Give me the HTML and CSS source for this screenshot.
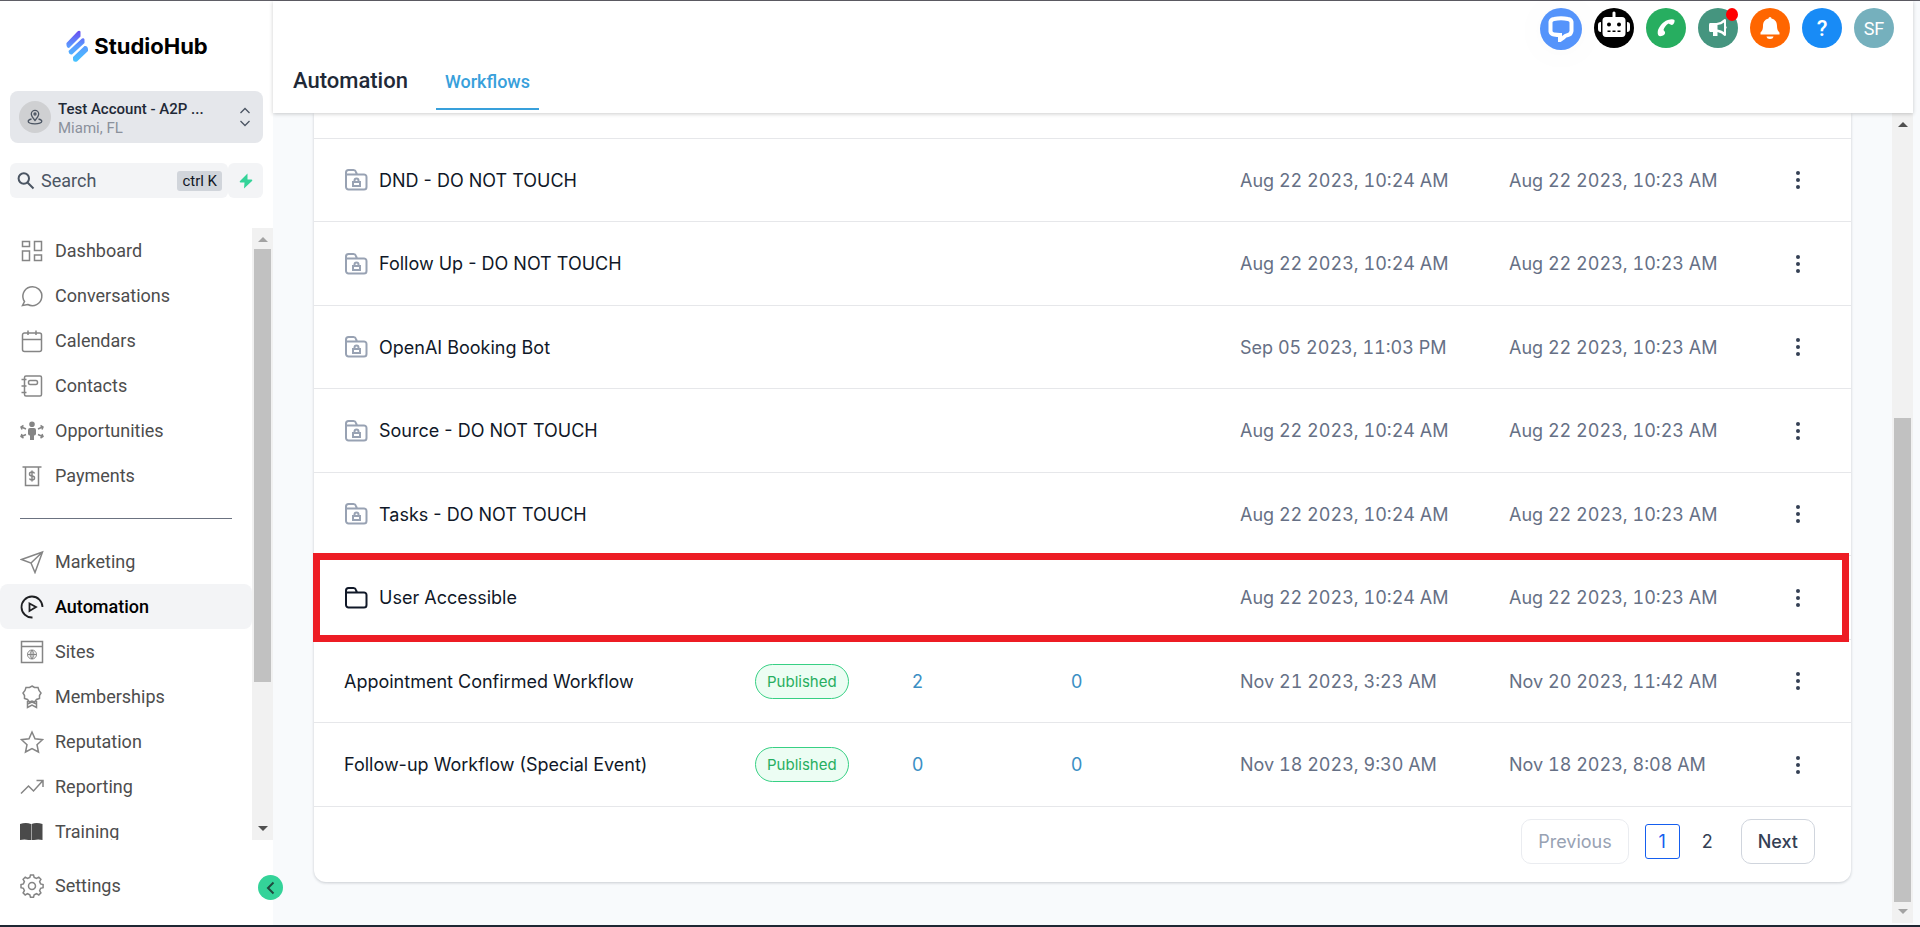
FILE: index.html
```html
<!DOCTYPE html>
<html lang="en">
<head>
    <meta charset="UTF-8">
    <meta name="viewport" content="width=device-width, initial-scale=1">
    <title>Workflows</title>
    <link rel="stylesheet" href="styles.css">
</head>
<body>
    <!-- Shared icons -->
    <svg class="sprite" aria-hidden="true">
        <symbol id="folder" viewBox="0 0 24 24">
            <path d="M2 19V4.500a2.500 2.500 0 0 1 2.500-2.500H9.500a2.500 2.500 0 0 1 2.400 1.800L13 6.500H19.500A2.500 2.500 0 0 1 22.500 9V19a2.500 2.500 0 0 1-2.500 2.500H4.500A2.500 2.500 0 0 1 2 19ZM2 6.500H13"/>
        </symbol>
        <symbol id="folder-lock" viewBox="0 0 24 24">
            <path d="M2 19V4.500a2.500 2.500 0 0 1 2.500-2.500H9.500a2.500 2.500 0 0 1 2.400 1.800L13 6.500H19.500A2.500 2.500 0 0 1 22.500 9V19a2.500 2.500 0 0 1-2.500 2.500H4.500A2.500 2.500 0 0 1 2 19ZM2 6.500H13M9 14h7v4H9ZM10.500 14v-1.500a2 2 0 0 1 4 0V14"/>
        </symbol>
        <symbol id="dots" viewBox="0 0 24 24">
            <circle cx="12" cy="5" r="2"/><circle cx="12" cy="12" r="2"/><circle cx="12" cy="19" r="2"/>
        </symbol>
    </svg>

    <div class="app">
        <aside class="sidebar">
            <div class="logo">
                <svg width="24" height="32" viewBox="0 0 24 32" aria-hidden="true">
                    <defs>
                        <linearGradient id="brand" x1="0" y1="0" x2="0" y2="1">
                            <stop offset="0" stop-color="#6a4cf0"/>
                            <stop offset="0.500" stop-color="#5b9bff"/>
                            <stop offset="1" stop-color="#45c4ff"/>
                        </linearGradient>
                    </defs>
                    <path fill="url(#brand)" d="M1.500 13 12 2q2-2 3.500-.5v5L4 18q-3-.5-2.500-5ZM3.500 21 17 8.500q2-1 2.500 1v3.500L7 24.500q-3 .5-3.500-3.500ZM8 27l11.500-11q3-.5 3.500 3v2L12 31.500q-4 1-4-2Z"/>
                </svg>
                <span>StudioHub</span>
            </div>

            <button class="account">
                <span class="account-icon">
                    <svg width="16" height="16" viewBox="0 0 16 16" class="line" aria-hidden="true">
                        <path d="M8 11.500C5.500 8.500 4.300 7 4.300 5a3.700 3.700 0 0 1 7.400 0c0 2-1.200 3.500-3.700 6.500ZM4.500 10C2.500 10.500 1.200 11.300 1.200 12.300c0 1.500 3 2.500 6.800 2.500s6.800-1 6.800-2.500c0-1-1.300-1.800-3.300-2.300"/>
                        <circle cx="8" cy="5" r="1"/>
                    </svg>
                </span>
                <span class="account-text">
                    <span class="account-name">Test Account - A2P ...</span>
                    <span class="account-city">Miami, FL</span>
                </span>
                <svg width="12" height="20" viewBox="0 0 12 20" class="line" aria-hidden="true">
                    <path d="M1.500 6 6 1.500 10.500 6M1.500 14 6 18.500 10.500 14"/>
                </svg>
            </button>

            <div class="search-row">
                <label class="search">
                    <svg width="18" height="18" viewBox="0 0 18 18" aria-hidden="true">
                        <path d="M11 11 16.500 16.500M12 6.500a5.200 5.200 0 1 1-10.400 0 5.200 5.200 0 0 1 10.400 0Z"/>
                    </svg>
                    <input type="text" placeholder="Search" aria-label="Search">
                    <kbd>ctrl K</kbd>
                </label>
                <button class="quick" aria-label="Quick actions">
                    <svg width="14" height="16" viewBox="0 0 14 16" aria-hidden="true">
                        <path d="M8.500.5 1 8q-1 1.300.5 1.500H5.500L5 15.500 13 8q1-1.300-.5-1.500H8.500Z"/>
                    </svg>
                </button>
            </div>

            <div class="nav-wrap">
                <nav class="nav">
                    <a href="#" class="nav-item">
                        <svg viewBox="0 0 24 24"><path d="M2.500 2.500h7v5h-7zM14.500 2.500h7v9h-7zM2.500 12h7v9.500h-7zM14.500 16h7v5.500h-7z"/></svg>
                        Dashboard
                    </a>
                    <a href="#" class="nav-item">
                        <svg viewBox="0 0 24 24"><path d="M4.500 17.500A9.500 9.500 0 1 1 7.800 20.500L2.500 21.500Z"/></svg>
                        Conversations
                    </a>
                    <a href="#" class="nav-item">
                        <svg viewBox="0 0 24 24"><path d="M4.500 4h15a2 2 0 0 1 2 2v14.500a2 2 0 0 1-2 2h-15a2 2 0 0 1-2-2V6a2 2 0 0 1 2-2ZM2.500 10.500h19M8 1.500V6M16 1.500V6"/></svg>
                        Calendars
                    </a>
                    <a href="#" class="nav-item">
                        <svg viewBox="0 0 24 24"><path d="M6 2h14a1.500 1.500 0 0 1 1.500 1.500v17A1.500 1.500 0 0 1 20 22H6a1.500 1.500 0 0 1-1.500-1.500v-17A1.500 1.500 0 0 1 6 2ZM1.500 5.500h5M1.500 12h5M1.500 18.500h5M10 6.500h6q1.500 0 1.500 2t-1.500 2h-6q-1.500 0-1.500-2t1.500-2Z"/></svg>
                        Contacts
                    </a>
                    <a href="#" class="nav-item">
                        <svg viewBox="0 0 24 24"><path class="solid" d="M12 2.500a2.800 2.800 0 1 1 0 5.600 2.800 2.800 0 0 1 0-5.600ZM10 9h4q2 0 2 2v4q-.5 1.500-2 1.500V21H10v-4.500q-1.500 0-2-1.500v-4q0-2 2-2Z"/><path d="M6 10 1.500 8M3.500 6.500 1 8l1 2.500M18 10l4.500-2M20.500 6.500 23 8l-1 2.500M6 15.500 1.500 17.500M2 15l-1 2.500L3.500 19M18 15.500l4.500 2M22 15l1 2.500-2.500 1.500"/></svg>
                        Opportunities
                    </a>
                    <a href="#" class="nav-item">
                        <svg viewBox="0 0 24 24"><path d="M2.500 3h19M5.500 3v18.500h13V3M14.500 9.500q-.5-1.500-2.500-1.500-2.500 0-2.500 2t2.500 2 2.500 2-2.500 2q-2 0-2.500-1.500M12 6.500v11"/></svg>
                        Payments
                    </a>
                    <hr>
                    <a href="#" class="nav-item">
                        <svg viewBox="0 0 24 24"><path d="M1.500 9.500 22.500 2 15 22.500 11 13ZM11 13l11.500-11"/></svg>
                        Marketing
                    </a>
                    <a href="#" class="nav-item active">
                        <svg viewBox="0 0 24 24"><path d="M12.500 22.500A10.500 10.500 0 1 1 22.500 12M9.500 8.500v7.500L16 12Z"/></svg>
                        Automation
                    </a>
                    <a href="#" class="nav-item">
                        <svg viewBox="0 0 24 24"><path d="M1.500 1.500h21v21h-21ZM1.500 6.500h21"/><path class="thin" d="M16.500 14.500a4.500 4.500 0 1 1-9 0 4.500 4.500 0 0 1 9 0ZM7.500 14.500h9M12 10v9M12 10q-4 4.500 0 9 4-4.500 0-9"/></svg>
                        Sites
                    </a>
                    <a href="#" class="nav-item">
                        <svg viewBox="0 0 24 24"><path d="m12 1 2.500 1.500 3.500 0 1 3 2 2.500-1.500 2.500 0 3-3 1-2 2.500-2.500-1-2.500 1-2-2.500-3-1 0-3L3 8l2-2.500 1-3 3.500 0ZM7.500 16v6.500L12 20l4.500 2.500V16M7.500 19l4.500-2 4.500 2"/></svg>
                        Memberships
                    </a>
                    <a href="#" class="nav-item">
                        <svg viewBox="0 0 24 24"><path d="m12 2 3 6.800 7.500.9-5.500 5 1.500 7.300L12 18.500 5.500 22 7 14.700l-5.500-5L9 8.800Z"/></svg>
                        Reputation
                    </a>
                    <a href="#" class="nav-item">
                        <svg viewBox="0 0 24 24"><path d="M1 18.500 8.500 11 13.500 16 22.500 6M16.500 5.500H23V12"/></svg>
                        Reporting
                    </a>
                    <a href="#" class="nav-item">
                        <svg viewBox="0 0 24 24"><path class="book" d="M0 4q6-2 11 0v17q-5-2.500-11-1ZM22.500 4q-6-2-11 0v17q5-2.500 11-1Z"/></svg>
                        Training
                    </a>
                </nav>
                <div class="scrollbar" aria-hidden="true">
                    <i class="arrow up muted"></i>
                    <div class="track"><div class="thumb nav-thumb"></div></div>
                    <i class="arrow down"></i>
                </div>
            </div>

            <div class="sidebar-footer">
                <a href="#" class="nav-item">
                    <svg viewBox="0 0 24 24"><path d="M9.800 3.500 10.500 1h3l.7 2.500 2.300 1 2.300-1.300 2.100 2.100-1.300 2.300 1 2.300 2.500.7v3l-2.500.7-1 2.300 1.300 2.300-2.100 2.100-2.300-1.300-2.300 1-.7 2.500h-3l-.7-2.500-2.300-1-2.300 1.300-2.100-2.100 1.300-2.300-1-2.300L1 13.600v-3l2.400-.7 1-2.300-1.300-2.300 2.100-2.100 2.300 1.300ZM15.500 12a3.500 3.500 0 1 1-7 0 3.500 3.500 0 0 1 7 0Z"/></svg>
                    Settings
                </a>
                <button class="collapse" aria-label="Collapse sidebar">
                    <svg width="10" height="14" viewBox="0 0 10 14"><path d="M7.500 1.500 2 7l5.500 5.500"/></svg>
                </button>
            </div>
        </aside>

        <main class="main">
            <header class="header">
                <h1>Automation</h1>
                <a href="#" class="tab">Workflows</a>
                <div class="actions">
                    <button class="round chat" aria-label="Chat">
                        <svg width="26" height="26" viewBox="0 0 26 26"><path d="M6 3Q13 1.500 20 3 23 3.500 23.500 6V15q-.5 3.500-3.500 4-3 .5-4.500 2.500l-3.500 2.500V19Q9 19 6 18.500 3 18 2.500 15.500V6Q3 3.500 6 3Z"/></svg>
                    </button>
                    <button class="round bot" aria-label="Bot">
                        <svg width="32" height="28" viewBox="0 0 32 28">
                            <path fill="#fff" d="M14.500 1.500q1.500-2 3 0V6H24q3.500 0 3.500 3.500V22q0 4-3.500 4H8q-3.500 0-3.500-4V9.500Q4.500 6 8 6h6.500ZM0 14q0-3 3-3v10q-3 0-3-3ZM29 11q3 0 3 3v4q0 3-3 3Z"/>
                            <path fill="#000" d="M11 11.500a2 2 0 1 1 0 4 2 2 0 0 1 0-4ZM21 11.500a2 2 0 1 1 0 4 2 2 0 0 1 0-4ZM9.500 19.500h3V21h-3ZM14.500 19.500h3V21h-3ZM19.500 19.500h3V21h-3Z"/>
                        </svg>
                    </button>
                    <button class="round phone" aria-label="Phone">
                        <svg width="20" height="20" viewBox="0 0 20 20"><path fill="#fff" d="M2 12C4 7 8 2.500 14 1.500q3-.5 4.500.5.5 2-1 4-1.500 1.500-3 .5l-2-1C10 7 8 9.500 7.500 12l1.500 2q.5 1.500-1 3-2 1.500-5 1Q1 16.500 2 12Z"/></svg>
                    </button>
                    <button class="round mega" aria-label="Announcements">
                        <svg width="20" height="20" viewBox="0 0 20 20"><path fill="#fff" fill-rule="evenodd" d="M2 5h6.500q4.500-.5 8-4l1.500.5V8q1.500 1.500 0 3v6.500l-1.500.5q-2.500-3-7-4v4H5v-4H2Q1 13.500 1 12V7Q1 5 2 5ZM9.500 7v4.500q4 .5 6.500 2.500V4.500q-2.500 2-6.500 2.500Z"/></svg>
                        <span class="badge"></span>
                    </button>
                    <button class="round bell" aria-label="Notifications">
                        <svg width="20" height="24" viewBox="0 0 20 24"><path fill="#fff" d="M10 1q1.500 0 1.500 1.500C15.500 3.500 17 6.500 17 10q0 4.500 2.500 6.500V18.500H.5V16.500Q3 14.500 3 10c0-3.500 1.500-6.500 5.500-7.500Q8.500 1 10 1ZM6.500 20.500h7q-.5 2.500-3.500 2.500t-3.500-2.500Z"/></svg>
                    </button>
                    <button class="round help" aria-label="Help">?</button>
                    <button class="round avatar">SF</button>
                </div>
            </header>

            <div class="content">
                <div class="page">
                    <section class="card">
                        <table>
                            <colgroup>
                                <col>
                                <col class="col-status">
                                <col class="col-total">
                                <col class="col-active">
                                <col class="col-updated">
                                <col class="col-created">
                                <col class="col-menu">
                            </colgroup>
                            <tbody>
                                <tr>
                                    <td><span class="name"><svg class="folder locked"><use href="#folder-lock"/></svg>DND - DO NOT TOUCH</span></td>
                                    <td></td><td></td><td></td>
                                    <td class="date">Aug 22 2023, 10:24 AM</td>
                                    <td class="date">Aug 22 2023, 10:23 AM</td>
                                    <td><button class="menu" aria-label="More"><svg><use href="#dots"/></svg></button></td>
                                </tr>
                                <tr>
                                    <td><span class="name"><svg class="folder locked"><use href="#folder-lock"/></svg>Follow Up - DO NOT TOUCH</span></td>
                                    <td></td><td></td><td></td>
                                    <td class="date">Aug 22 2023, 10:24 AM</td>
                                    <td class="date">Aug 22 2023, 10:23 AM</td>
                                    <td><button class="menu" aria-label="More"><svg><use href="#dots"/></svg></button></td>
                                </tr>
                                <tr>
                                    <td><span class="name"><svg class="folder locked"><use href="#folder-lock"/></svg>OpenAI Booking Bot</span></td>
                                    <td></td><td></td><td></td>
                                    <td class="date">Sep 05 2023, 11:03 PM</td>
                                    <td class="date">Aug 22 2023, 10:23 AM</td>
                                    <td><button class="menu" aria-label="More"><svg><use href="#dots"/></svg></button></td>
                                </tr>
                                <tr>
                                    <td><span class="name"><svg class="folder locked"><use href="#folder-lock"/></svg>Source - DO NOT TOUCH</span></td>
                                    <td></td><td></td><td></td>
                                    <td class="date">Aug 22 2023, 10:24 AM</td>
                                    <td class="date">Aug 22 2023, 10:23 AM</td>
                                    <td><button class="menu" aria-label="More"><svg><use href="#dots"/></svg></button></td>
                                </tr>
                                <tr>
                                    <td><span class="name"><svg class="folder locked"><use href="#folder-lock"/></svg>Tasks - DO NOT TOUCH</span></td>
                                    <td></td><td></td><td></td>
                                    <td class="date">Aug 22 2023, 10:24 AM</td>
                                    <td class="date">Aug 22 2023, 10:23 AM</td>
                                    <td><button class="menu" aria-label="More"><svg><use href="#dots"/></svg></button></td>
                                </tr>
                                <tr class="highlighted">
                                    <td><span class="name"><svg class="folder"><use href="#folder"/></svg>User Accessible</span><span class="highlight"></span></td>
                                    <td></td><td></td><td></td>
                                    <td class="date">Aug 22 2023, 10:24 AM</td>
                                    <td class="date">Aug 22 2023, 10:23 AM</td>
                                    <td><button class="menu" aria-label="More"><svg><use href="#dots"/></svg></button></td>
                                </tr>
                                <tr>
                                    <td>Appointment Confirmed Workflow</td>
                                    <td><span class="status">Published</span></td>
                                    <td><a href="#">2</a></td>
                                    <td><a href="#">0</a></td>
                                    <td class="date">Nov 21 2023, 3:23 AM</td>
                                    <td class="date">Nov 20 2023, 11:42 AM</td>
                                    <td><button class="menu" aria-label="More"><svg><use href="#dots"/></svg></button></td>
                                </tr>
                                <tr>
                                    <td>Follow-up Workflow (Special Event)</td>
                                    <td><span class="status">Published</span></td>
                                    <td><a href="#">0</a></td>
                                    <td><a href="#">0</a></td>
                                    <td class="date">Nov 18 2023, 9:30 AM</td>
                                    <td class="date">Nov 18 2023, 8:08 AM</td>
                                    <td><button class="menu" aria-label="More"><svg><use href="#dots"/></svg></button></td>
                                </tr>
                            </tbody>
                        </table>
                        <div class="pagination">
                            <button class="step" disabled>Previous</button>
                            <div class="pages">
                                <button class="current">1</button>
                                <button>2</button>
                            </div>
                            <button class="step">Next</button>
                        </div>
                    </section>
                </div>
                <div class="scrollbar" aria-hidden="true">
                    <i class="arrow up"></i>
                    <div class="track bottom"><div class="thumb page-thumb"></div></div>
                    <i class="arrow down muted"></i>
                </div>
            </div>
        </main>
    </div>
</body>
</html>
```

FILE: styles.css
```css
* {
    box-sizing: border-box;
}

body {
    margin: 0;
    background: #f8fafc;
    color: #101828;
    font-family: Inter, "Liberation Sans", sans-serif;
    font-size: 18px;
}

button {
    font: inherit;
    border: none;
    background: none;
    padding: 0;
    cursor: pointer;
}

a {
    color: #3b8fc4;
    text-decoration: none;
}

svg {
    display: block;
    flex: none;
}

.sprite {
    position: absolute;
    width: 0;
    height: 0;
}

.line {
    fill: none;
    stroke: #4b5563;
    stroke-width: 1.3;
}

.app {
    display: flex;
    height: 100vh;
    border-top: 1px solid #5f5e66;
    border-bottom: 2px solid #1f2733;
}

/* Sidebar */
.sidebar {
    display: flex;
    flex-direction: column;
    flex: none;
    width: 273px;
    background: #fff;
    font-family: Roboto, "Liberation Sans", sans-serif;
}

.logo {
    display: flex;
    align-items: center;
    justify-content: center;
    gap: 5px;
    height: 90px;
    color: #000;
    font-family: Inter, sans-serif;
    font-size: 22px;
    font-weight: 700;
}

.account {
    display: flex;
    align-items: center;
    height: 52px;
    margin: 0 10px;
    padding: 0 12px 0 9px;
    border-radius: 8px;
    background: #e5e7eb;
    text-align: left;
}

.account-icon {
    display: flex;
    align-items: center;
    justify-content: center;
    width: 32px;
    height: 32px;
    border-radius: 50%;
    background: #cfd0d2;
}

.account-text {
    display: flex;
    flex-direction: column;
    flex: 1;
    margin-left: 7px;
    padding-top: 4px;
    font-size: 15px;
    line-height: 19px;
}

.account-name {
    color: #1f2937;
    font-weight: 500;
}

.account-city {
    color: #8b919c;
}

.search-row {
    display: flex;
    margin: 20px 10px 30px;
}

.search {
    display: flex;
    align-items: center;
    flex: 1;
    min-width: 0;
    height: 35px;
    padding: 0 6px 0 7px;
    border-radius: 6px;
    background: #f3f4f6;
}

.search svg {
    fill: none;
    stroke: #4b5563;
    stroke-width: 2;
}

.search input {
    flex: 1;
    width: 100%;
    min-width: 0;
    padding: 0 6px;
    border: none;
    outline: none;
    background: none;
    font: inherit;
}

.search input::placeholder {
    color: #4b5563;
}

kbd {
    flex: none;
    padding: 0 5px;
    border-radius: 3px;
    background: #d1d5db;
    color: #111827;
    font-family: inherit;
    font-size: 15px;
    line-height: 20px;
}

.quick {
    display: flex;
    align-items: center;
    justify-content: center;
    flex: none;
    width: 35px;
    border-radius: 6px;
    background: #f3f4f6;
}

.quick path {
    fill: #34d399;
}

.nav-wrap {
    display: flex;
    flex: 1;
    min-height: 0;
}

.nav {
    flex: 1;
    overflow: hidden;
}

.nav-item {
    display: flex;
    align-items: center;
    gap: 11px;
    height: 45px;
    padding-left: 20px;
    border-radius: 8px;
    color: #4d4d4d;
}

.nav-item svg {
    width: 24px;
    height: 24px;
    fill: none;
    stroke: #858585;
    stroke-width: 1.5;
}

.nav-item .thin {
    stroke-width: 1;
}

.nav-item .solid {
    fill: #858585;
    stroke: none;
}

.nav-item .book {
    fill: #4a4a4a;
    stroke: none;
}

.nav-item.active {
    background: #f3f4f6;
    color: #000;
    font-weight: 500;
}

.nav-item.active svg {
    stroke: #1f2023;
    stroke-width: 1.8;
}

.nav hr {
    height: 1px;
    margin: 20px 20px;
    border: none;
    background: #6b7280;
}

.sidebar-footer {
    position: relative;
    height: 85px;
    padding-top: 23px;
}

.collapse {
    position: absolute;
    right: -10px;
    top: 35px;
    display: flex;
    align-items: center;
    justify-content: center;
    width: 25px;
    height: 25px;
    border-radius: 50%;
    background: #34d399;
}

.collapse path {
    fill: none;
    stroke: #1f4b3f;
    stroke-width: 2;
}

/* Scrollbars */
.scrollbar {
    display: flex;
    flex-direction: column;
    align-items: center;
    width: 21px;
    background: #f1f1f1;
}

.track {
    flex: 1;
    display: flex;
    flex-direction: column;
    width: 17px;
}

.track.bottom {
    justify-content: flex-end;
}

.thumb {
    background: #c1c1c1;
}

.nav-thumb {
    height: 76%;
}

.page-thumb {
    height: 63%;
}

.arrow {
    margin: 9px 0 7px;
    border: 5px solid transparent;
    border-top-width: 0;
    border-bottom-color: #505050;
}

.arrow.down {
    margin: 7px 0 9px;
    border-top: 5px solid #505050;
    border-bottom: 0;
}

.arrow.up.muted {
    border-bottom-color: #a3a3a3;
}

.arrow.down.muted {
    border-top-color: #a3a3a3;
}

/* Header */
.main {
    display: flex;
    flex-direction: column;
    flex: 1;
    min-width: 0;
    margin-right: 7px;
}

.header {
    display: flex;
    align-items: flex-end;
    position: relative;
    height: 112px;
    padding: 0 19px 0 20px;
    background: #fff;
    box-shadow: 0 1px 4px rgba(0, 0, 0, 0.2);
    font-family: Roboto, "Liberation Sans", sans-serif;
}

h1 {
    margin: 0 28px 17px 0;
    color: #1f2937;
    font-size: 22px;
    font-weight: 500;
    line-height: 30px;
}

.tab {
    margin-bottom: 3px;
    padding: 0 9px 13px;
    border-bottom: 2px solid #38a0db;
    color: #38a0db;
    font-weight: 500;
    line-height: 26px;
}

.actions {
    display: flex;
    align-items: flex-start;
    gap: 12px;
    align-self: flex-start;
    margin: 7px 0 0 auto;
}

.round {
    display: flex;
    align-items: center;
    justify-content: center;
    position: relative;
    width: 40px;
    height: 40px;
    border-radius: 50%;
    color: #fff;
}

.chat {
    width: 42px;
    height: 42px;
    background: #5594fb;
    box-shadow: 0 2px 40px rgba(0, 0, 0, 0.03);
}

.chat path {
    fill: none;
    stroke: #fff;
    stroke-width: 4;
}

.bot {
    background: #000;
}

.bot svg {
    margin-bottom: 6px;
}

.phone {
    background: #27ae60;
}

.mega {
    background: #45957f;
}

.badge {
    position: absolute;
    top: 0;
    right: 0;
    width: 12px;
    height: 13px;
    border-radius: 50%;
    background: #f00;
}

.bell {
    background: #ff6600;
}

.help {
    background: #188bf6;
    font-size: 22px;
    font-weight: 500;
}

.avatar {
    background: #75b0bd;
    font-size: 18px;
}

/* Workflow list */
.content {
    display: flex;
    flex: 1;
    min-height: 0;
    padding-bottom: 2px;
}

.page {
    flex: 1;
    padding: 0 41px;
    overflow: hidden;
}

.card {
    padding-top: 25px;
    border-radius: 0 0 12px 12px;
    background: #fff;
    box-shadow: 0 1px 3px rgba(16, 24, 40, 0.2);
}

table {
    width: 100%;
    border-collapse: collapse;
    border-top: 1px solid #e6e7ea;
    table-layout: fixed;
}

.col-status {
    width: 157px;
}

.col-total {
    width: 159px;
}

.col-active {
    width: 169px;
}

.col-updated {
    width: 269px;
}

.col-created {
    width: 236px;
}

.col-menu {
    width: 106px;
}

tr {
    height: 83px;
    border-bottom: 1px solid #e6e7ea;
}

tr:nth-child(even) {
    height: 84px;
}

td {
    padding: 0;
    white-space: nowrap;
}

td:first-child {
    padding-left: 30px;
}

.name {
    display: flex;
    align-items: center;
    gap: 11px;
}

.folder {
    width: 24px;
    height: 24px;
    fill: none;
    stroke: #101828;
    stroke-width: 2;
}

.folder.locked {
    stroke: #98a2b3;
}

.date {
    color: #667085;
    font-variant-numeric: tabular-nums;
}

.status {
    display: inline-block;
    padding: 0 11px;
    border: 1px solid #37d084;
    border-radius: 18px;
    background: #ecfdf3;
    color: #27ae60;
    font-size: 15px;
    line-height: 33px;
}

.menu {
    display: block;
    margin: 0 auto;
}

.menu svg {
    width: 24px;
    height: 24px;
    fill: #344054;
}

.highlighted {
    position: relative;
}

.highlight {
    position: absolute;
    inset: -3px 2px -3px -1px;
    border: 7px solid #ed1c24;
    pointer-events: none;
}

.pagination {
    display: flex;
    align-items: center;
    justify-content: flex-end;
    gap: 16px;
    padding: 12px 36px 18px;
}

.pages {
    display: flex;
    gap: 10px;
}

.pages button {
    width: 35px;
    height: 35px;
    color: #344054;
}

.pages .current {
    border: 1px solid #155eef;
    border-radius: 3px;
    color: #155eef;
}

.step {
    height: 45px;
    padding: 0 16px;
    border: 1px solid #d0d5dd;
    border-radius: 10px;
    color: #344054;
    font-weight: 500;
}

.step:disabled {
    border-color: #eaecf0;
    color: #98a2b3;
    font-weight: 400;
}
```
